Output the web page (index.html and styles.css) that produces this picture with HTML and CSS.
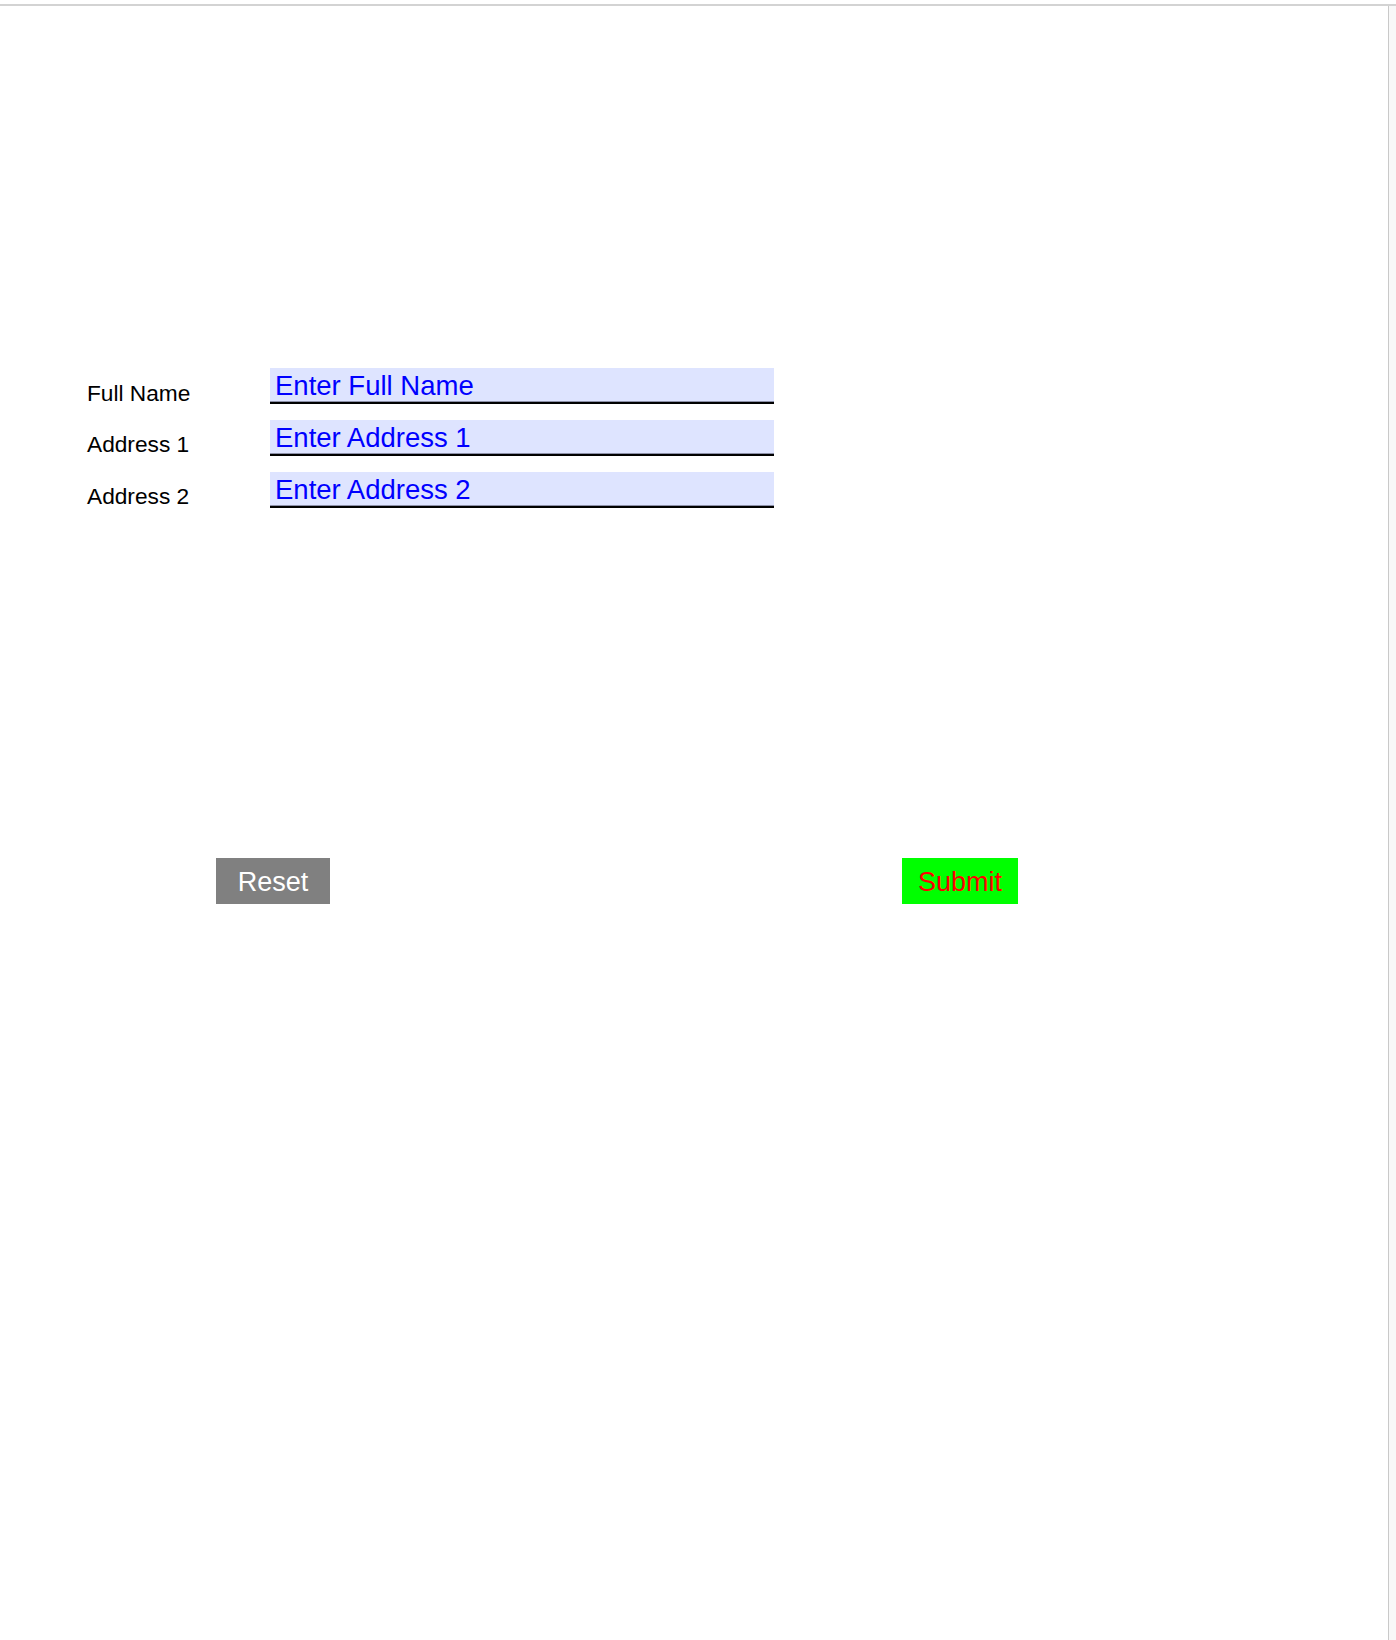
FILE: index.html
```html
<!DOCTYPE html>
<html lang="en">
<head>
<meta charset="utf-8">
<title>Form</title>
<link rel="stylesheet" href="styles.css">
</head>
<body>
<div class="topline"></div>
<div class="page">
  <div class="sheet">
    <div class="form">
      <div class="label">Full Name</div>
      <div class="field">Enter Full Name</div>
      <div class="label">Address 1</div>
      <div class="field">Enter Address 1</div>
      <div class="label">Address 2</div>
      <div class="field">Enter Address 2</div>
    </div>
    <div class="actions">
      <div class="btn reset">Reset</div>
      <div class="btn submit">Submit</div>
    </div>
  </div>
  <div class="gutter"></div>
</div>
</body>
</html>
```
FILE: styles.css
```css
html, body {
  margin: 0;
  padding: 0;
  background: #ffffff;
  font-family: "Liberation Sans", Arial, sans-serif;
}

.topline {
  height: 4px;
  border-bottom: 2px solid #d3d3d3;
}

.page {
  display: flex;
  height: 1634px;
}

.sheet {
  width: 1388px;
  border-right: 1px solid #c9c9c9;
  background: #ffffff;
}

.gutter {
  flex: 1;
  background: #f8f8f8;
}

.form {
  display: grid;
  grid-template-columns: 183px 504px;
  grid-auto-rows: 36px;
  row-gap: 15.8px;
  padding-top: 362px;
  padding-left: 87px;
}

.label {
  align-self: end;
  margin-bottom: 1.5px;
  font-size: 22.7px;
  line-height: 20px;
  color: #000000;
}

.field {
  box-sizing: border-box;
  height: 36px;
  padding-left: 5px;
  padding-top: 1px;
  background: #dee4ff;
  border-bottom: 2px solid #000000;
  box-shadow: inset 0 -1px 0 #8c90a8;
  color: #0000ff;
  font-size: 27.5px;
  line-height: 33px;
  white-space: nowrap;
}

.actions {
  display: flex;
  gap: 572px;
  margin-top: 350px;
  padding-left: 216px;
}

.btn {
  box-sizing: border-box;
  height: 46px;
  padding-top: 2px;
  line-height: 44px;
  text-align: center;
  font-size: 27px;
}

.reset {
  width: 114px;
  background: #808080;
  color: #ffffff;
}

.submit {
  width: 116px;
  background: #00ff00;
  color: #ff0000;
}
```
